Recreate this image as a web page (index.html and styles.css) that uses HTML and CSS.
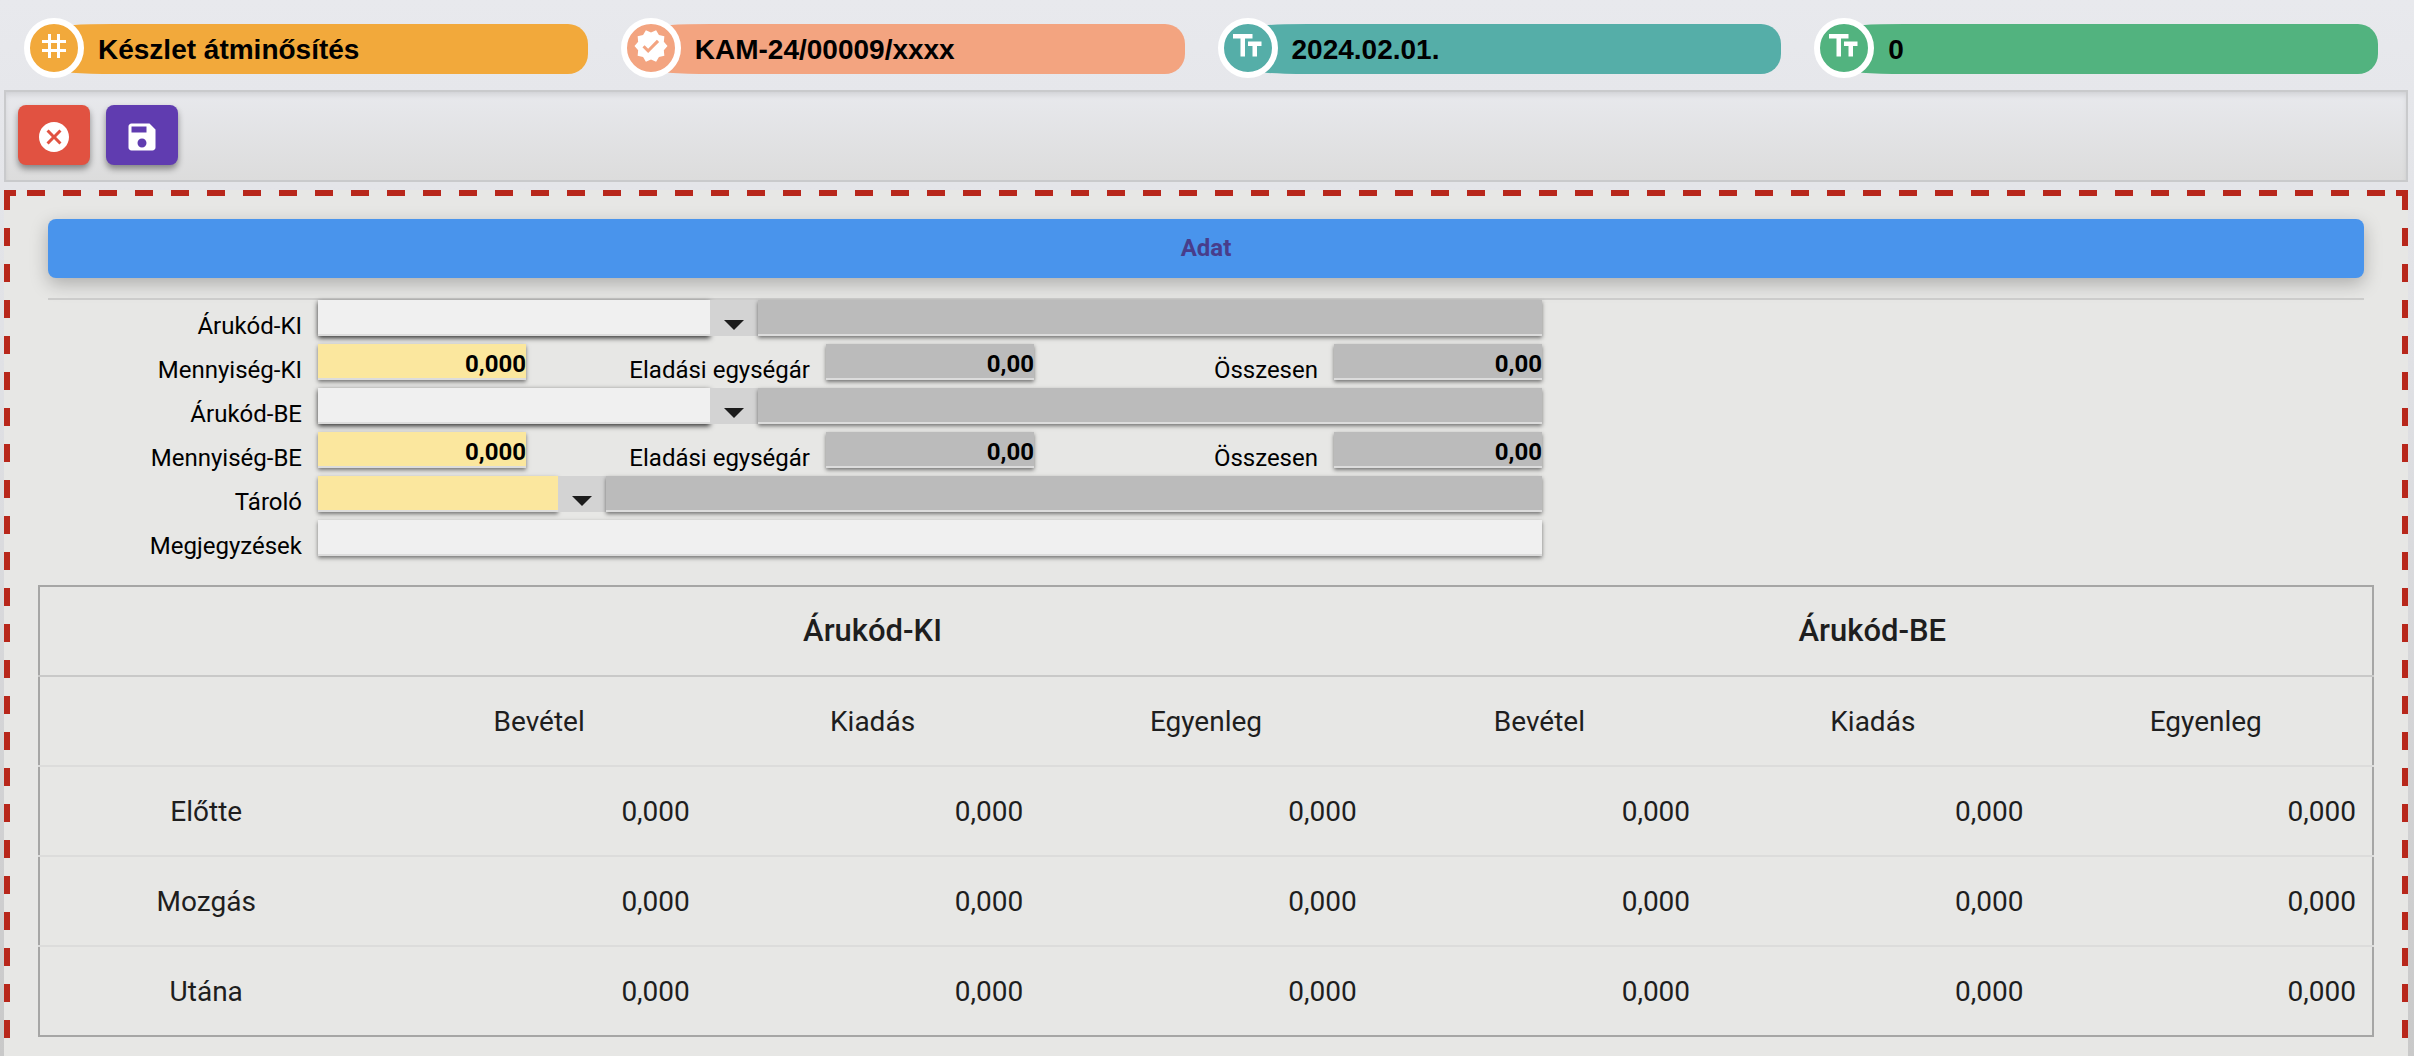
FILE: index.html
```html
<!DOCTYPE html>
<html lang="hu">
<head>
<meta charset="utf-8">
<meta name="viewport" content="width=device-width, initial-scale=1">
<title>Készlet átminősítés</title>
<link rel="stylesheet" href="styles.css">
</head>
<body>
<header class="chips">
  <div class="chip chip-orange">
    <span class="chip-icon"><svg viewBox="0 0 24 24"><path d="M20 10V8h-4V4h-2v4h-4V4H8v4H4v2h4v4H4v2h4v4h2v-4h4v4h2v-4h4v-2h-4v-4h4zm-6 4h-4v-4h4v4z"/></svg></span>
    <span class="chip-text">Készlet átminősítés</span>
  </div>
  <div class="chip chip-salmon">
    <span class="chip-icon"><svg viewBox="0 0 24 24"><path d="M23 12l-2.44-2.79.34-3.69-3.61-.82-1.89-3.2L12 2.96 8.6 1.5 6.71 4.69 3.1 5.5l.34 3.7L1 12l2.44 2.79-.34 3.7 3.61.82L8.6 22.5l3.4-1.47 3.4 1.46 1.89-3.19 3.61-.82-.34-3.69L23 12zm-12.91 4.72l-3.8-3.81 1.48-1.48 2.32 2.33 5.85-5.87 1.48 1.48-7.33 7.35z"/></svg></span>
    <span class="chip-text">KAM-24/00009/xxxx</span>
  </div>
  <div class="chip chip-teal">
    <span class="chip-icon"><svg viewBox="0 0 24 24"><path d="M2 4v3h5v12h3V7h5V4H2zm19 5h-9v3h3v7h3v-7h3V9z"/></svg></span>
    <span class="chip-text">2024.02.01.</span>
  </div>
  <div class="chip chip-green">
    <span class="chip-icon"><svg viewBox="0 0 24 24"><path d="M2 4v3h5v12h3V7h5V4H2zm19 5h-9v3h3v7h3v-7h3V9z"/></svg></span>
    <span class="chip-text">0</span>
  </div>
</header>

<nav class="toolbar">
  <button class="tool tool-cancel" type="button" aria-label="Mégse"><svg viewBox="0 0 24 24"><path d="M12 2C6.47 2 2 6.47 2 12s4.470 10 10 10 10-4.470 10-10S17.530 2 12 2zm5 13.590L15.590 17 12 13.410 8.410 17 7 15.590 10.590 12 7 8.410 8.410 7 12 10.590 15.590 7 17 8.410 13.410 12 17 15.590z"/></svg></button>
  <button class="tool tool-save" type="button" aria-label="Mentés"><svg viewBox="0 0 24 24"><path d="M17 3H5c-1.110 0-2 .9-2 2v14c0 1.100.89 2 2 2h14c1.100 0 2-.9 2-2V7l-4-4zm-5 16c-1.660 0-3-1.340-3-3s1.340-3 3-3 3 1.340 3 3-1.340 3-3 3zm3-10H5V5h10v4z"/></svg></button>
</nav>

<main class="panel">
  <button class="tab" type="button">Adat</button>

  <form class="fields">
    <label for="code-out">Árukód-KI</label>
    <div class="combo combo-wide">
      <input class="raised" id="code-out" type="text">
      <button class="arrow" type="button" aria-label="Lista"></button>
      <input class="readonly" type="text" aria-label="Árukód-KI megnevezés" readonly>
    </div>

    <label for="qty-out">Mennyiség-KI</label>
    <input class="required number" id="qty-out" type="text" value="0,000">
    <label for="price-out">Eladási egységár</label>
    <input class="readonly number" id="price-out" type="text" value="0,00" readonly>
    <label for="sum-out">Összesen</label>
    <input class="readonly number" id="sum-out" type="text" value="0,00" readonly>

    <label for="code-in">Árukód-BE</label>
    <div class="combo combo-wide">
      <input class="raised" id="code-in" type="text">
      <button class="arrow" type="button" aria-label="Lista"></button>
      <input class="readonly" type="text" aria-label="Árukód-BE megnevezés" readonly>
    </div>

    <label for="qty-in">Mennyiség-BE</label>
    <input class="required number" id="qty-in" type="text" value="0,000">
    <label for="price-in">Eladási egységár</label>
    <input class="readonly number" id="price-in" type="text" value="0,00" readonly>
    <label for="sum-in">Összesen</label>
    <input class="readonly number" id="sum-in" type="text" value="0,00" readonly>

    <label for="store">Tároló</label>
    <div class="combo combo-narrow">
      <input class="required" id="store" type="text">
      <button class="arrow" type="button" aria-label="Lista"></button>
      <input class="readonly" type="text" aria-label="Tároló megnevezés" readonly>
    </div>

    <label for="notes">Megjegyzések</label>
    <input class="full" id="notes" type="text">
  </form>

  <table class="balance">
    <thead>
      <tr class="groups"><td></td><th colspan="3" scope="colgroup">Árukód-KI</th><th colspan="3" scope="colgroup">Árukód-BE</th></tr>
      <tr class="heads"><td></td><th scope="col">Bevétel</th><th scope="col">Kiadás</th><th scope="col">Egyenleg</th><th scope="col">Bevétel</th><th scope="col">Kiadás</th><th scope="col">Egyenleg</th></tr>
    </thead>
    <tbody>
      <tr><th scope="row">Előtte</th><td>0,000</td><td>0,000</td><td>0,000</td><td>0,000</td><td>0,000</td><td>0,000</td></tr>
      <tr><th scope="row">Mozgás</th><td>0,000</td><td>0,000</td><td>0,000</td><td>0,000</td><td>0,000</td><td>0,000</td></tr>
      <tr><th scope="row">Utána</th><td>0,000</td><td>0,000</td><td>0,000</td><td>0,000</td><td>0,000</td><td>0,000</td></tr>
    </tbody>
  </table>
</main>
</body>
</html>
```

FILE: styles.css
```css
* {
  box-sizing: border-box;
}

body {
  margin: 0;
  min-height: 100vh;
  padding: 0 6px 0 4px;
  display: flex;
  flex-direction: column;
  font-family: Roboto, "Liberation Sans", sans-serif;
  font-size: 24px;
  color: #000;
  background: linear-gradient(#e8e9ed, #e0e1e5 35%, #c9c9c9);
}

button,
input {
  font: inherit;
  border: 0;
  padding: 0;
  margin: 0;
  border-radius: 0;
}

/* Header chips */
.chips {
  display: grid;
  grid-template-columns: repeat(4, 1fr);
  gap: 33px;
  padding: 18px 30px 12px 20px;
}

.chip {
  display: flex;
  align-items: center;
  gap: 14px;
  height: 60px;
  font-family: "Liberation Sans", Arial, sans-serif;
  font-size: 28px;
  font-weight: 700;
  position: relative;
  isolation: isolate;
}

/* Coloured bar that runs out from behind the round icon */
.chip::before {
  content: "";
  position: absolute;
  inset: 6px 0 4px 30px;
  z-index: -1;
  border-radius: 60px 20px 20px 60px / 4px 20px 20px 4px;
  background: var(--tone);
}

.chip-orange { --tone: #f2a93b; }
.chip-salmon { --tone: #f3a480; }
.chip-teal { --tone: #55aea8; }
.chip-green { --tone: #52b37f; }

.chip-icon {
  width: 60px;
  height: 60px;
  border: 6px solid #fff;
  border-radius: 50%;
  background: var(--tone);
  display: grid;
  place-items: center;
  padding-bottom: 4px;
}

.chip-icon svg,
.tool svg {
  width: 36px;
  height: 36px;
  fill: #fff;
}

.chip-text {
  padding-top: 4px;
}

/* Toolbar */
.toolbar {
  display: flex;
  gap: 16px;
  height: 92px;
  padding: 13px 12px;
  border: 2px solid #c9cacc;
  background: linear-gradient(#e8e9ed, #dcdcdc);
  box-shadow: inset 0 4px 6px -2px rgba(0, 0, 0, .12);
}

.tool {
  width: 72px;
  height: 60px;
  border-radius: 8px;
  display: grid;
  place-items: center;
  padding-top: 4px;
  box-shadow: 0 4px 6px rgba(0, 0, 0, .4);
}

.tool-cancel { background: #e15241; }
.tool-save { background: #603cb0; }

/* Panel with a long-dash frame */
.panel {
  --dash: #b8271b;
  flex: 1;
  margin-top: 8px;
  padding: 29px 34px 19px;
  background:
    linear-gradient(var(--dash), var(--dash)) left top / 12px 6px no-repeat,
    linear-gradient(var(--dash), var(--dash)) right top / 12px 6px no-repeat,
    linear-gradient(90deg, var(--dash) 9px, transparent 9px 27px, var(--dash) 27px) center top / 36px 6px repeat-x,
    linear-gradient(var(--dash) 18px, transparent 18px) left 2px / 6px 36px repeat-y,
    linear-gradient(var(--dash) 18px, transparent 18px) right 2px / 6px 36px repeat-y,
    #e7e7e5;
}

.tab {
  display: block;
  width: calc(100% - 20px);
  height: 59px;
  margin: 0 10px;
  padding-bottom: 2px;
  border-radius: 8px;
  background: #4994ec;
  color: #483d8b;
  font-weight: 700;
  box-shadow: 0 6px 18px rgba(0, 0, 0, .25);
}

/* Form */
.fields {
  display: grid;
  grid-template-columns: 270px 208px 300px 208px 300px 208px;
  row-gap: 8px;
  margin: 20px 10px 0;
  padding-bottom: 29px;
  border-top: 2px solid #cccccb;
}

label {
  height: 36px;
  padding: 12px 16px 0 0;
  line-height: 28px;
  text-align: right;
}

input {
  width: 100%;
  min-width: 0;
  height: 36px;
  border-bottom: 2px solid #dcdcdc;
  background: #f0f0f0;
  box-shadow: 0 2px 4px rgba(0, 0, 0, .5);
}

.number {
  text-align: right;
  font-weight: 700;
  padding-top: 6px;
}

.required { background: #fbe79e; }
.readonly { background: #bbb; }
.raised { box-shadow: 0 2px 5px rgba(0, 0, 0, .8); }
.full { grid-column: 2 / -1; }

.combo {
  grid-column: 2 / -1;
  display: grid;
}

.combo-wide { grid-template-columns: 392px 48px 1fr; }
.combo-narrow { grid-template-columns: 240px 48px 1fr; }

.arrow {
  display: grid;
  place-items: center;
  padding-top: 14px;
  background: #d3d3d3;
}

.arrow::before {
  content: "";
  border: 10px solid transparent;
  border-top-color: #1c1c1c;
  border-bottom: 0;
}

/* Balance table */
.balance {
  width: 100%;
  table-layout: fixed;
  border-collapse: collapse;
  border: 2px solid #a6a6a5;
  font-size: 28px;
  color: #1e1e1e;
}

.balance tr {
  height: 90px;
  border-top: 2px solid #dcdcdb;
}

.balance .groups { border-top: 2px solid #a6a6a5; }
.balance .heads { border-top: 2px solid #c9c9c8; }

.balance th {
  padding: 0;
  font-weight: 400;
  text-align: center;
}

.balance .groups th {
  padding-bottom: 2px;
  font-size: 31px;
  font-weight: 500;
}

.balance td {
  padding: 0 16px;
  text-align: right;
}
```
